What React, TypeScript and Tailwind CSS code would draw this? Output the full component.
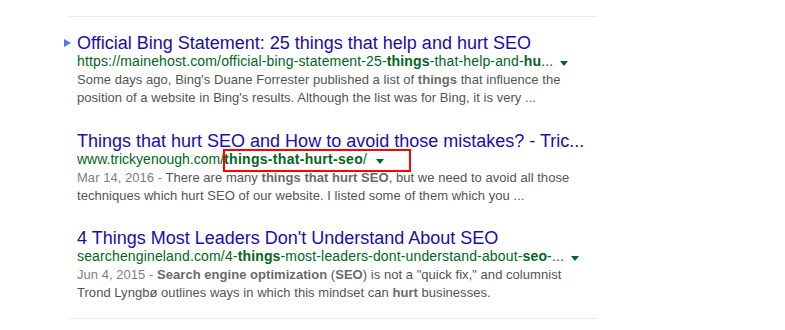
import React from "react";

function Caret({ ml }: { ml: string }) {
  return (
    <span className={`inline-block ${ml} w-0 h-0 border-t-[5px] border-t-[#006621] border-x-[4px] border-x-transparent`} />
  );
}

export default function App() {
  return (
    <div className="w-[785px] h-[330px] bg-white overflow-hidden font-['Liberation_Sans',Arial,sans-serif]">
      <div className="ml-[69px] w-[528px] pt-[16px]">
        <div className="h-px bg-[#ebebeb]" />
        <div className="pl-[8px] pt-[16px] flex flex-col">
          {/* Result 1 */}
          <div>
            <div className="relative text-[18px] leading-[20px] text-[#1a0dab] whitespace-nowrap">
              <span className="absolute left-[-13px] top-[6px] w-0 h-0 border-l-[7px] border-l-[#4a7fe0] border-y-[4px] border-y-transparent" />
              Official Bing Statement: 25 things that help and hurt SEO
            </div>
            <div className="text-[14px] leading-[16px] text-[#006621] whitespace-nowrap tracking-[0.15px]">
              https://mainehost.com/official-bing-statement-25-<b>things</b>-that-help-and-<b>hu</b>...
              <Caret ml="ml-[7px]" />
            </div>
            <div className="mt-[2px] text-[13px] leading-[18px] text-[#545454] whitespace-nowrap tracking-[0.04px]">
              Some days ago, Bing's Duane Forrester published a list of <b className="text-[#6a6a6a]">things</b> that influence the
              <br />
              position of a website in Bing's results. Although the list was for Bing, it is very ...
            </div>
          </div>

          {/* Result 2 */}
          <div className="mt-[24px]">
            <div className="text-[18px] leading-[20px] text-[#1a0dab] whitespace-nowrap">
              Things that hurt SEO and How to avoid those mistakes? - Tric...
            </div>
            <div className="relative text-[14px] leading-[16px] text-[#006621] whitespace-nowrap">
              www.trickyenough.com/<b className="tracking-[0.3px]">things-that-hurt-seo</b>/
              <Caret ml="ml-[9px]" />
              <span className="absolute left-[146px] top-[-2px] w-[188px] h-[23px] border-2 border-[#ff0000]" />
            </div>
            <div className="mt-[2px] text-[13px] leading-[18px] text-[#545454] whitespace-nowrap tracking-[0.04px]">
              <span className="text-[#808080]">Mar 14, 2016 - </span>There are many <b className="text-[#6a6a6a]">things that hurt SEO</b>, but we need to avoid all those
              <br />
              techniques which hurt SEO of our website. I listed some of them which you ...
            </div>
          </div>

          {/* Result 3 */}
          <div className="mt-[23px]">
            <div className="text-[18px] leading-[20px] text-[#1a0dab] whitespace-nowrap">
              4 Things Most Leaders Don't Understand About SEO
            </div>
            <div className="text-[14px] leading-[16px] text-[#006621] whitespace-nowrap tracking-[0.15px]">
              searchengineland.com/4-<b>things</b>-most-leaders-dont-understand-about-<b>seo</b>-...
              <Caret ml="ml-[7px]" />
            </div>
            <div className="mt-[2px] text-[13px] leading-[18px] text-[#545454] whitespace-nowrap tracking-[0.04px]">
              <span className="text-[#808080]">Jun 4, 2015 - </span><b className="text-[#6a6a6a]">Search engine optimization</b> (<b className="text-[#6a6a6a]">SEO</b>) is not a "quick fix," and columnist
              <br />
              Trond Lyngbø outlines ways in which this mindset can <b className="text-[#6a6a6a]">hurt</b> businesses.
            </div>
          </div>
        </div>
        <div className="h-px bg-[#ebebeb] mt-[16px]" />
      </div>
    </div>
  );
}
